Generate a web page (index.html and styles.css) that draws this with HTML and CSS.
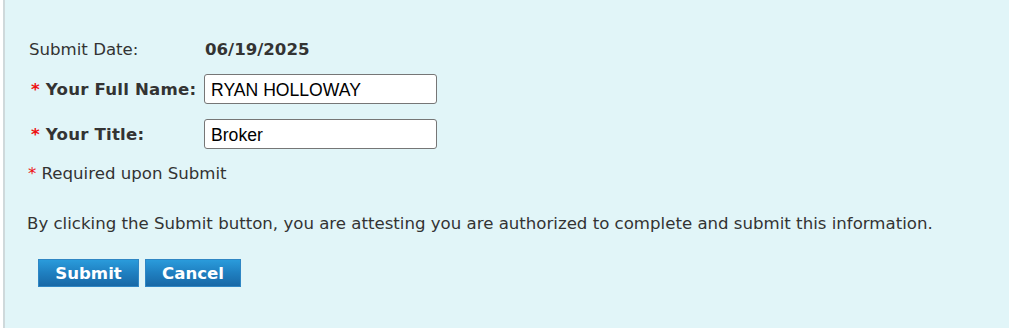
FILE: index.html
```html
<!DOCTYPE html>
<html>
<head>
<meta charset="utf-8">
<link rel="stylesheet" href="styles.css">
</head>
<body>
<div class="frame">
  <div class="panel">
    <div class="fields">
      <div class="label plain">Submit Date:</div>
      <div class="value date">06/19/2025</div>
      <div class="label"><span class="req">*</span> Your Full Name:</div>
      <div class="value"><input class="text" type="text" value="RYAN HOLLOWAY"></div>
      <div class="label"><span class="req">*</span> Your Title:</div>
      <div class="value"><input class="text" type="text" value="Broker"></div>
    </div>
    <p class="note"><span class="req">*</span> Required upon Submit</p>
    <p class="attest">By clicking the Submit button, you are attesting you are authorized to complete and submit this information.</p>
    <div class="actions">
      <button class="btn btn-submit" type="button">Submit</button>
      <button class="btn btn-cancel" type="button">Cancel</button>
    </div>
  </div>
</div>
</body>
</html>
```

FILE: styles.css
```css
html, body {
  margin: 0;
  padding: 0;
  background: #ffffff;
}
body {
  font-family: "DejaVu Sans", Verdana, sans-serif;
  font-size: 16.6px;
  color: #333333;
}
.frame {
  padding-left: 3px;
  height: 328px;
  overflow: hidden;
}
.panel {
  background: #e1f5f8;
  border-left: 2px solid #cfd9db;
  border-bottom-left-radius: 10px;
  height: 340px;
  box-sizing: border-box;
  padding: 40px 0 0 22px;
}
.fields {
  display: grid;
  grid-template-columns: 177px 240px;
  row-gap: 15px;
  align-items: center;
}
.label {
  font-weight: bold;
  white-space: nowrap;
  padding-left: 4px;
  letter-spacing: 0.2px;
}
.label.plain {
  font-weight: normal;
  padding-left: 2px;
  letter-spacing: 0;
}
.value.date {
  font-weight: bold;
  padding-left: 1px;
}
.req {
  color: #ee1111;
  font-weight: bold;
}
.text {
  display: block;
  box-sizing: border-box;
  width: 233px;
  height: 30px;
  margin: 0;
  padding: 2px 6px 0;
  border: 1px solid #767676;
  border-radius: 3px;
  background: #ffffff;
  font-family: "Liberation Sans", Arial, sans-serif;
  font-size: 17.6px;
  color: #000000;
}
.note {
  margin: 15px 0 0 0;
  padding-left: 1px;
}
.note .req {
  font-weight: normal;
}
.attest {
  margin: 31px 0 0 0;
}
.actions {
  display: flex;
  gap: 6px;
  margin-top: 26px;
  padding-left: 11px;
}
.btn {
  box-sizing: border-box;
  height: 28px;
  border: 1px solid #2f86c4;
  background: linear-gradient(to bottom, #2a9bdb 0%, #1f7fc0 50%, #1868a6 100%);
  color: #ffffff;
  font-family: "DejaVu Sans", Verdana, sans-serif;
  font-weight: bold;
  font-size: 16.6px;
  padding: 0;
  margin: 0;
  cursor: pointer;
}
.btn-submit {
  width: 101px;
}
.btn-cancel {
  width: 96px;
}
```
